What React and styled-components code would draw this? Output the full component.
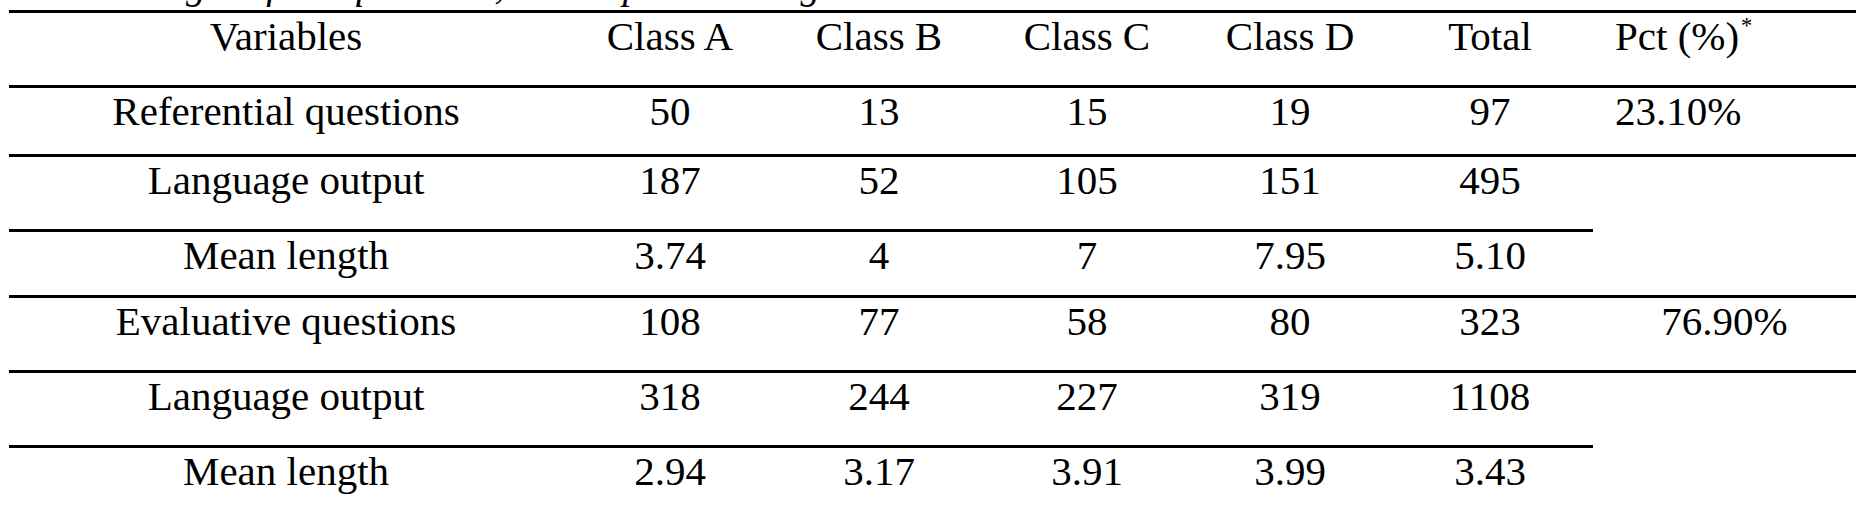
import React from "react";
import styled, { createGlobalStyle } from "styled-components";

const GlobalStyle = createGlobalStyle`
  html, body {
    margin: 0;
    padding: 0;
    background: #ffffff;
    overflow: hidden;
  }
  body {
    font-family: "Liberation Serif", "Times New Roman", serif;
    color: #000000;
  }
`;

const Page = styled.div`
  width: 1876px;
  padding: 0 20px 0 9px;
  box-sizing: border-box;
`;

const Caption = styled.div`
  margin-top: -35px;
  margin-left: ${(p) => p.$indent}px;
  height: 41px;
  line-height: 41px;
  font-size: 39.5px;
  font-style: italic;
  white-space: nowrap;
`;

const Table = styled.div`
  margin-top: 4px;
  display: grid;
  grid-template-columns: 554px 214px 204px 212px 194px 206px 263px;
  grid-template-rows: 75px 69px 75px 66px 75px 75px 60px;
  font-size: 41px;
`;

const Cell = styled.div`
  border-top: 3px solid #000000;
  line-height: 47px;
  white-space: nowrap;
  text-align: ${(p) => (p.$left ? "left" : "center")};
  padding-left: ${(p) => (p.$left ? "22px" : "0")};
  grid-row: ${(p) => (p.$span ? `span ${p.$span}` : "auto")};
`;

const Mark = styled.sup`
  font-size: 0.55em;
  vertical-align: 0.75em;
  line-height: 0;
  margin-left: 2px;
`;

const headers = ["Variables", "Class A", "Class B", "Class C", "Class D", "Total"];

const groups = [
  {
    pct: "23.10%",
    pctLeft: true,
    rows: [
      ["Referential questions", "50", "13", "15", "19", "97"],
      ["Language output", "187", "52", "105", "151", "495"],
      ["Mean length", "3.74", "4", "7", "7.95", "5.10"],
    ],
  },
  {
    pct: "76.90%",
    pctLeft: false,
    rows: [
      ["Evaluative questions", "108", "77", "58", "80", "323"],
      ["Language output", "318", "244", "227", "319", "1108"],
      ["Mean length", "2.94", "3.17", "3.91", "3.99", "3.43"],
    ],
  },
];

export default function App() {
  return (
    <Page>
      <GlobalStyle />
      <Caption $indent={-8}>
        Table 2 Length of the questions, the output and length
      </Caption>
      <Table>
        {headers.map((h) => (
          <Cell key={h}>{h}</Cell>
        ))}
        <Cell $left>
          Pct (%)<Mark>*</Mark>
        </Cell>
        {groups.map((g, gi) =>
          g.rows.map((row, ri) => (
            <React.Fragment key={`${gi}-${ri}`}>
              {row.map((v, ci) => (
                <Cell key={ci}>{v}</Cell>
              ))}
              {ri === 0 && <Cell $left={g.pctLeft}>{g.pct}</Cell>}
              {ri === 1 && <Cell $span={2} />}
            </React.Fragment>
          ))
        )}
      </Table>
    </Page>
  );
}
